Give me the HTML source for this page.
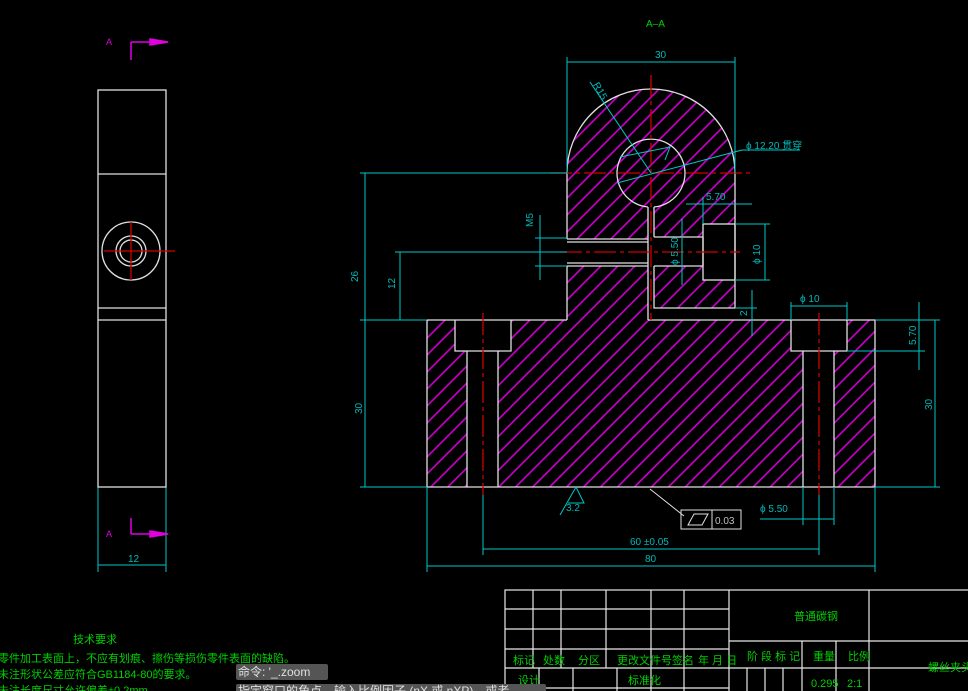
<!DOCTYPE html>
<html><head><meta charset="utf-8"><style>
html,body{margin:0;padding:0;background:#000;width:968px;height:691px;overflow:hidden}
svg{display:block}
text{font-family:"Liberation Sans","Noto Sans CJK SC",sans-serif}
.c{stroke:#00c8c8;stroke-width:1;fill:none}
.w{stroke:#e0e0e0;stroke-width:1.3;fill:none}
.r{stroke:#d00000;stroke-width:1.3;fill:none;stroke-dasharray:22 4 4 4}
.ct{fill:#00b8b8;font-size:10px}
.g{fill:#00d000;font-size:11px;font-family:"Liberation Sans","Noto Sans CJK SC",sans-serif}
.tb{stroke:#e8e8e8;stroke-width:1.2;fill:none}
</style></head><body>
<svg width="968" height="691" viewBox="0 0 968 691" xmlns="http://www.w3.org/2000/svg">
<defs>
<pattern id="h" patternUnits="userSpaceOnUse" width="12" height="12" patternTransform="rotate(45)">
<line x1="1" y1="0" x2="1" y2="12" stroke="#d000d0" stroke-width="1.6"/>
</pattern>
</defs>
<g fill="url(#h)">
<path d="M567,173 A84,84 0 0 1 735,173 L735,224 L703,224 L703,237 L654,237 L654,207 A34,34 0 1 0 648,207 L648,239 L567,239 Z M651,173 m-34,0 a34,34 0 1 0 68,0 a34,34 0 1 0 -68,0" fill-rule="evenodd"/>
<rect x="654" y="266" width="49" height="42"/>
<rect x="703" y="280" width="32" height="28"/>
<rect x="567" y="266" width="81" height="54"/>
<path d="M427,320 L455,320 L455,351 L467,351 L467,487 L427,487 Z"/>
<path d="M511,320 L567,320 L648,320 L654,320 L791,320 L791,351 L803,351 L803,487 L498,487 L498,351 L511,351 Z"/>
<path d="M847,320 L875,320 L875,487 L834,487 L834,351 L847,351 Z"/>
</g>
<g class="w">
<path d="M567,239 L567,173 A84,84 0 0 1 735,173 L735,308 L654,308 L654,266"/>
<path d="M648,207 A34,34 0 1 1 654,207"/>
<line x1="648" y1="207" x2="648" y2="320"/><line x1="654" y1="207" x2="654" y2="237"/>
<line x1="567" y1="239" x2="648" y2="239"/><line x1="567" y1="242" x2="648" y2="242"/>
<line x1="567" y1="266" x2="648" y2="266"/><line x1="567" y1="263" x2="648" y2="263"/>
<line x1="567" y1="266" x2="567" y2="320"/>
<line x1="654" y1="237" x2="703" y2="237"/><line x1="654" y1="266" x2="703" y2="266"/>
<rect x="703" y="224" width="32" height="56"/><line x1="703" y1="237" x2="703" y2="266"/>
<line x1="427" y1="320" x2="567" y2="320"/>
<path d="M648,320 L875,320 L875,487 L427,487 L427,320"/>
<path d="M455,320 L455,351 L511,351 L511,320 M467,351 L467,487 M498,351 L498,487"/>
<path d="M791,320 L791,351 L847,351 L847,320 M803,351 L803,487 M834,351 L834,487"/>
</g>
<g class="r">
<line x1="651" y1="75" x2="651" y2="320"/>
<line x1="550" y1="173" x2="750" y2="173"/>
<line x1="560" y1="252" x2="740" y2="252"/>
<line x1="483" y1="313" x2="483" y2="495"/>
<line x1="819" y1="313" x2="819" y2="495"/>
</g>
<g class="c">
<line x1="567" y1="57" x2="567" y2="173"/><line x1="735" y1="57" x2="735" y2="173"/>
<line x1="567" y1="62" x2="735" y2="62"/>
<line x1="590" y1="82" x2="651" y2="173"/>
<path d="M620,157 L670,147 L665,160"/>
<line x1="617" y1="183" x2="742" y2="150"/><line x1="742" y1="150" x2="800" y2="150"/>
<line x1="360" y1="173" x2="567" y2="173"/>
<line x1="365" y1="173" x2="365" y2="320"/>
<line x1="395" y1="252" x2="567" y2="252"/><line x1="400" y1="252" x2="400" y2="320"/>
<line x1="360" y1="320" x2="427" y2="320"/>
<line x1="365" y1="320" x2="365" y2="487"/><line x1="360" y1="487" x2="427" y2="487"/>
<line x1="535" y1="238" x2="567" y2="238"/><line x1="535" y1="266" x2="567" y2="266"/><line x1="540" y1="215" x2="540" y2="280"/>
<line x1="686" y1="204" x2="752" y2="204"/><line x1="703" y1="197" x2="703" y2="224"/>
<line x1="682" y1="219" x2="682" y2="285"/>
<line x1="735" y1="224" x2="770" y2="224"/><line x1="735" y1="280" x2="770" y2="280"/><line x1="765" y1="224" x2="765" y2="280"/>
<line x1="735" y1="308" x2="757" y2="308"/><line x1="752" y1="290" x2="752" y2="336"/>
<line x1="791" y1="302" x2="791" y2="320"/><line x1="847" y1="302" x2="847" y2="320"/><line x1="791" y1="306" x2="847" y2="306"/>
<line x1="875" y1="320" x2="940" y2="320"/><line x1="847" y1="351" x2="925" y2="351"/><line x1="919" y1="302" x2="919" y2="370"/>
<line x1="875" y1="487" x2="940" y2="487"/><line x1="935" y1="320" x2="935" y2="487"/>
<line x1="427" y1="487" x2="427" y2="572"/><line x1="875" y1="487" x2="875" y2="572"/>
<line x1="427" y1="566" x2="875" y2="566"/>
<line x1="483" y1="495" x2="483" y2="555"/><line x1="819" y1="495" x2="819" y2="555"/>
<line x1="483" y1="549" x2="819" y2="549"/>
<line x1="760" y1="519" x2="834" y2="519"/><line x1="803" y1="487" x2="803" y2="525"/><line x1="834" y1="487" x2="834" y2="525"/>
<path d="M560,515 L576,487 L584,503 L568,503"/>
<line x1="98" y1="487" x2="98" y2="572"/><line x1="166" y1="487" x2="166" y2="572"/><line x1="98" y1="565" x2="166" y2="565"/>
</g>
<g class="ct">
<text x="655" y="58">30</text>
<text x="592" y="90" transform="rotate(60 597 88)">R15</text>
<text x="746" y="149">ϕ 12.20 贯穿</text>
<text x="706" y="200">5.70</text>
<text x="358" y="282" transform="rotate(-90 358 282)">26</text>
<text x="395" y="289" transform="rotate(-90 395 289)">12</text>
<text x="533" y="227" transform="rotate(-90 533 227)">M5</text>
<text x="678" y="265" transform="rotate(-90 678 265)">ϕ 5.50</text>
<text x="760" y="264" transform="rotate(-90 760 264)">ϕ 10</text>
<text x="747" y="316" transform="rotate(-90 747 316)">2</text>
<text x="800" y="302">ϕ 10</text>
<text x="916" y="345" transform="rotate(-90 916 345)">5.70</text>
<text x="932" y="410" transform="rotate(-90 932 410)">30</text>
<text x="362" y="414" transform="rotate(-90 362 414)">30</text>
<text x="566" y="511">3.2</text>
<text x="760" y="512">ϕ 5.50</text>
<text x="630" y="545">60 ±0.05</text>
<text x="645" y="562">80</text>
<text x="128" y="562">12</text>
<text x="646" y="27" fill="#00d000">A–A</text>
</g>
<line x1="650" y1="489" x2="684" y2="516" stroke="#e0e0e0"/>
<rect x="681" y="510" width="60" height="19" fill="none" stroke="#e0e0e0"/>
<line x1="712" y1="510" x2="712" y2="529" stroke="#e0e0e0"/>
<path d="M688,525 L694,514 L708,514 L702,525 Z" fill="none" stroke="#e0e0e0"/>
<text x="715" y="524" fill="#c0c0c0" font-size="10">0.03</text>
<g class="w">
<rect x="98" y="90" width="68" height="397"/>
<line x1="98" y1="174" x2="166" y2="174"/><line x1="98" y1="308" x2="166" y2="308"/><line x1="98" y1="320" x2="166" y2="320"/>
<circle cx="131" cy="251" r="29"/><circle cx="131" cy="251" r="15"/><circle cx="131" cy="251" r="11"/>
</g>
<g stroke="#d00000" stroke-width="1.3"><line x1="104" y1="251" x2="175" y2="251"/><line x1="131" y1="222" x2="131" y2="280"/></g>
<g stroke="#e000e0" stroke-width="1.5" fill="#e000e0">
<line x1="131" y1="42" x2="131" y2="60"/><line x1="131" y1="42" x2="152" y2="42"/><path d="M150,39 L168,42 L150,45 Z"/>
<line x1="131" y1="518" x2="131" y2="534"/><line x1="131" y1="534" x2="152" y2="534"/><path d="M150,531 L168,534 L150,537 Z"/>
</g>
<text x="106" y="45" fill="#e000e0" font-size="9">A</text>
<text x="106" y="537" fill="#e000e0" font-size="9">A</text>
<g class="tb">
<rect x="505" y="590" width="470" height="110"/>
<line x1="505" y1="609" x2="729" y2="609"/><line x1="505" y1="629" x2="729" y2="629"/><line x1="505" y1="649" x2="729" y2="649"/><line x1="505" y1="668" x2="968" y2="668"/><line x1="505" y1="688" x2="729" y2="688"/>
<line x1="533" y1="590" x2="533" y2="668"/><line x1="561" y1="590" x2="561" y2="668"/><line x1="606" y1="590" x2="606" y2="668"/><line x1="651" y1="590" x2="651" y2="691"/><line x1="684" y1="590" x2="684" y2="691"/>
<line x1="539" y1="668" x2="539" y2="691"/><line x1="573" y1="668" x2="573" y2="691"/><line x1="617" y1="668" x2="617" y2="691"/>
<line x1="729" y1="590" x2="729" y2="691"/><line x1="869" y1="590" x2="869" y2="691"/>
<line x1="729" y1="641" x2="968" y2="641"/>
<line x1="802" y1="641" x2="802" y2="691"/><line x1="836" y1="641" x2="836" y2="691"/>
<line x1="747" y1="668" x2="747" y2="691"/><line x1="765" y1="668" x2="765" y2="691"/><line x1="783" y1="668" x2="783" y2="691"/>
</g>
<g class="g" font-size="10">
<text x="794" y="620">普通碳钢</text>
<text x="513" y="664">标记</text><text x="543" y="664">处数</text><text x="578" y="664">分区</text><text x="617" y="664">更改文件号签名</text><text x="698" y="664">年 月 日</text>
<text x="747" y="660">阶 段 标 记</text><text x="813" y="660">重量</text><text x="848" y="660">比例</text>
<text x="928" y="671">螺丝夹头</text>
<text x="518" y="684">设计</text><text x="628" y="684">标准化</text>
<text x="811" y="687">0.295</text><text x="847" y="687">2:1</text>
</g>
<g class="g">
<text x="73" y="643">技术要求</text>
<text x="-2" y="662">零件加工表面上，不应有划痕、擦伤等损伤零件表面的缺陷。</text>
<text x="-2" y="678">未注形状公差应符合GB1184-80的要求。</text>
<text x="-2" y="694">未注长度尺寸允许偏差±0.2mm</text>
</g>
<rect x="236" y="664" width="92" height="16" fill="#555" rx="2"/>
<text x="238" y="676" fill="#e0e0e0" font-size="12">命令: '_.zoom</text>
<rect x="236" y="684" width="310" height="10" fill="#555" rx="2"/>
<text x="238" y="695" fill="#e0e0e0" font-size="12">指定窗口的角点，输入比例因子 (nX 或 nXP)，或者</text>
</svg>
</body></html>
